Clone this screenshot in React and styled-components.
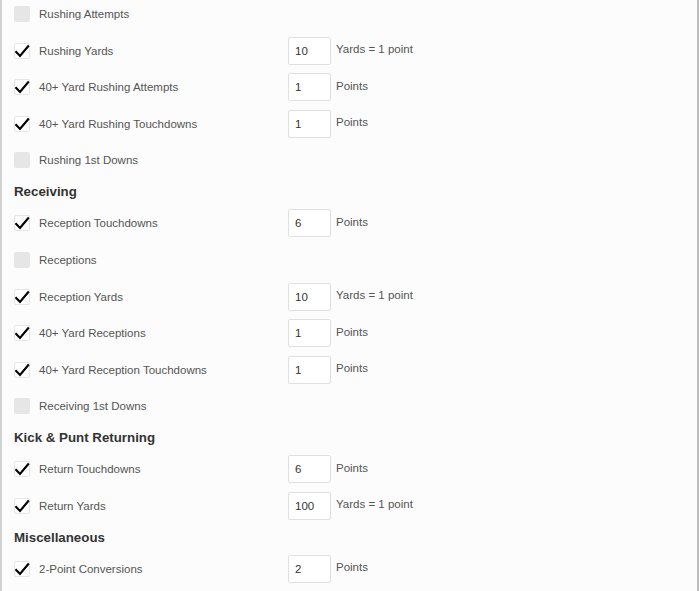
import React from 'react'
import styled, { createGlobalStyle } from 'styled-components'

const sections = [
    {
        title: null,
        rows: [
            { label: 'Rushing Attempts', checked: false },
            { label: 'Rushing Yards', checked: true, value: '10', unit: 'Yards = 1 point' },
            { label: '40+ Yard Rushing Attempts', checked: true, value: '1', unit: 'Points' },
            { label: '40+ Yard Rushing Touchdowns', checked: true, value: '1', unit: 'Points' },
            { label: 'Rushing 1st Downs', checked: false }
        ]
    },
    {
        title: 'Receiving',
        rows: [
            { label: 'Reception Touchdowns', checked: true, value: '6', unit: 'Points' },
            { label: 'Receptions', checked: false },
            { label: 'Reception Yards', checked: true, value: '10', unit: 'Yards = 1 point' },
            { label: '40+ Yard Receptions', checked: true, value: '1', unit: 'Points' },
            { label: '40+ Yard Reception Touchdowns', checked: true, value: '1', unit: 'Points' },
            { label: 'Receiving 1st Downs', checked: false }
        ]
    },
    {
        title: 'Kick & Punt Returning',
        rows: [
            { label: 'Return Touchdowns', checked: true, value: '6', unit: 'Points' },
            { label: 'Return Yards', checked: true, value: '100', unit: 'Yards = 1 point' }
        ]
    },
    {
        title: 'Miscellaneous',
        rows: [
            { label: '2-Point Conversions', checked: true, value: '2', unit: 'Points' }
        ]
    }
]

const GlobalStyle = createGlobalStyle`
    html, body {
        margin: 0;
        padding: 0;
        background: #fff;
    }
`

const Panel = styled.div`
    box-sizing: border-box;
    width: 699px;
    height: 591px;
    overflow: hidden;
    background: #fcfcfc;
    border-left: 2px solid #d2d2d2;
    border-right: 2px solid #bdbdbd;
    padding: 0 0 0 12px;
    font-family: "Liberation Sans", Arial, sans-serif;
`

const List = styled.div`
    margin-top: -4.3px;
`

const Heading = styled.div`
    height: 26.4px;
    display: flex;
    align-items: center;
    font-size: 13.3px;
    font-weight: bold;
    color: #333;
`

const Row = styled.div`
    height: 36.6px;
    display: flex;
    align-items: center;
`

const Box = styled.span`
    box-sizing: border-box;
    flex: none;
    width: 16px;
    height: 16px;
    margin-right: 9px;
    border-radius: 2px;
    background: ${p => (p.$checked ? '#fff' : '#e6e6e6')};
    border: 1px solid #e6e6e6;
    position: relative;

    svg {
        position: absolute;
        left: -1px;
        top: -1px;
    }
`

const Label = styled.span`
    width: 249px;
    flex: none;
    font-size: 11.5px;
    color: #555;
`

const Field = styled.input`
    box-sizing: border-box;
    width: 43px;
    height: 28px;
    flex: none;
    padding: 0 0 0 6px;
    border: 1px solid #e0e0e0;
    border-radius: 2px;
    background: #fff;
    font-family: inherit;
    font-size: 11.5px;
    color: #333;
    outline: none;
`

const Unit = styled.span`
    margin-left: 5px;
    margin-bottom: 3px;
    font-size: 11.5px;
    color: #555;
`

const Check = ({ checked }) => (
    <Box $checked={checked}>
        {checked && (
            <svg width="16" height="16" viewBox="0 0 16 16">
                <path d="M1.5 8.3 L6 13 L14.8 2.5" fill="none" stroke="#000" strokeWidth="2.1" />
            </svg>
        )}
    </Box>
)

const App = () => {
    return (
        <Panel>
            <GlobalStyle />
            <List>
                {sections.map((section, i) => (
                    <div key={i}>
                        {section.title && <Heading>{section.title}</Heading>}
                        {section.rows.map(row => (
                            <Row key={row.label}>
                                <Check checked={row.checked} />
                                <Label>{row.label}</Label>
                                {row.value && (
                                    <>
                                        <Field defaultValue={row.value} />
                                        <Unit>{row.unit}</Unit>
                                    </>
                                )}
                            </Row>
                        ))}
                    </div>
                ))}
            </List>
        </Panel>
    )
}

export default App
